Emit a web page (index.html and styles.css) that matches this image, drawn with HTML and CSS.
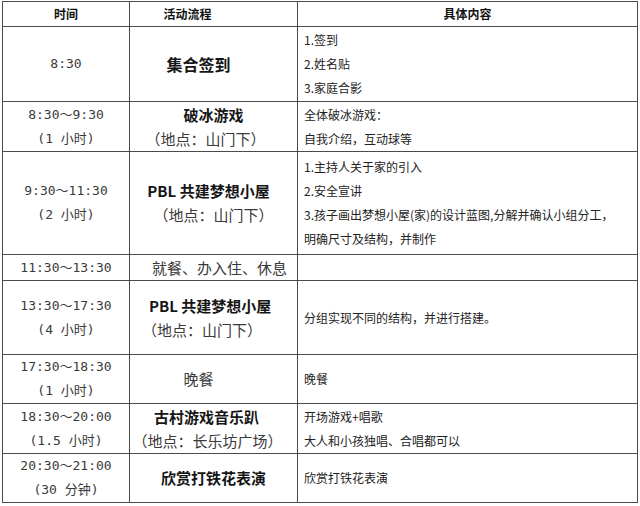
FILE: index.html
```html
<!DOCTYPE html>
<html lang="zh">
<head>
<meta charset="utf-8">
<title>活动流程</title>
<link rel="stylesheet" href="styles.css">
</head>
<body>
<table class="sched">
  <colgroup><col class="c1"><col class="c2"><col class="c3"></colgroup>
  <tr class="r-h">
    <th>时间</th>
    <th><div class="sh-26">活动流程</div></th>
    <th>具体内容</th>
  </tr>
  <tr class="r1">
    <td class="time"><div>8:30</div></td>
    <td class="act"><div class="b sh-15 big">集合签到</div></td>
    <td class="det"><div>1.签到</div><div>2.姓名贴</div><div>3.家庭合影</div></td>
  </tr>
  <tr class="r2">
    <td class="time"><div>8:30～9:30</div><div>(1 小时)</div></td>
    <td class="act"><div class="b">破冰游戏</div><div class="sh-8">（地点：山门下）</div></td>
    <td class="det"><div>全体破冰游戏：</div><div>自我介绍，互动球等</div></td>
  </tr>
  <tr class="r3">
    <td class="time"><div>9:30～11:30</div><div>(2 小时)</div></td>
    <td class="act"><div class="b sh-5">PBL 共建梦想小屋</div><div>（地点：山门下）</div></td>
    <td class="det"><div>1.主持人关于家的引入</div><div>2.安全宣讲</div><div>3.孩子画出梦想小屋(家)的设计蓝图,分解并确认小组分工，</div><div>明确尺寸及结构，并制作</div></td>
  </tr>
  <tr class="r4">
    <td class="time"><div>11:30～13:30</div></td>
    <td class="act"><div class="sh6">就餐、办入住、休息</div></td>
    <td class="det"></td>
  </tr>
  <tr class="r5">
    <td class="time"><div>13:30～17:30</div><div>(4 小时)</div></td>
    <td class="act left"><div class="b">PBL 共建梦想小屋</div><div class="pull">（地点：山门下）</div></td>
    <td class="det"><div>分组实现不同的结构，并进行搭建。</div></td>
  </tr>
  <tr class="r6">
    <td class="time"><div>17:30～18:30</div><div>(1 小时)</div></td>
    <td class="act"><div class="sh-15">晚餐</div></td>
    <td class="det"><div>晚餐</div></td>
  </tr>
  <tr class="r7">
    <td class="time"><div>18:30～20:00</div><div>(1.5 小时)</div></td>
    <td class="act"><div class="b sh-7">古村游戏音乐趴</div><div class="sh-6">（地点：长乐坊广场）</div></td>
    <td class="det"><div>开场游戏+唱歌</div><div>大人和小孩独唱、合唱都可以</div></td>
  </tr>
  <tr class="r8">
    <td class="time"><div>20:30～21:00</div><div>(30 分钟)</div></td>
    <td class="act"><div class="b">欣赏打铁花表演</div></td>
    <td class="det"><div>欣赏打铁花表演</div></td>
  </tr>
</table>
</body>
</html>
```

FILE: styles.css
```css
html, body {
  margin: 0;
  padding: 0;
  background: #ffffff;
}

body {
  font-family: "Noto Sans CJK SC", "Noto Sans", sans-serif;
  color: #222;
}

.sched {
  border-collapse: collapse;
  margin: 1px 0 0 2px;
  table-layout: fixed;
  width: 635px;
}

.c1 { width: 127px; }
.c2 { width: 168px; }
.c3 { width: 340px; }

.sched th,
.sched td {
  border: 1px solid #4a4a4a;
  padding: 0;
  vertical-align: middle;
}

.sched th {
  font-size: 12px;
  font-weight: bold;
  color: #111;
  text-align: center;
  line-height: 16px;
}

.r-h { height: 25px; }
.r1 { height: 75px; }
.r2 { height: 50px; }
.r3 { height: 103px; }
.r4 { height: 26px; }
.r5 { height: 74px; }
.r6 { height: 48px; }
.r7 { height: 50px; }
.r8 { height: 49px; }

.sched .time {
  text-align: center;
  font-family: "DejaVu Sans Mono", "Noto Sans CJK SC", monospace;
  font-size: 13px;
  line-height: 24px;
  color: #3a3a3a;
}

.sched .act {
  text-align: center;
  font-size: 15px;
  line-height: 24px;
  color: #3a3a3a;
}

.sched .act.left {
  text-align: left;
  padding-left: 19px;
}

.act .pull { margin-left: -7px; }

.act .b {
  font-weight: bold;
  color: #151515;
}

.act .big { font-size: 16px; }

.sched .det {
  text-align: left;
  padding-left: 6px;
  font-size: 12px;
  line-height: 24px;
  color: #222;
  white-space: nowrap;
}

.sh-26 { padding-right: 52px; }
.sh-15 { padding-right: 30px; }
.sh-8 { padding-right: 16px; }
.sh-7 { padding-right: 14px; }
.sh-6 { padding-right: 12px; }
.sh-5 { padding-right: 10px; }
.sh6 { padding-left: 12px; }
```
